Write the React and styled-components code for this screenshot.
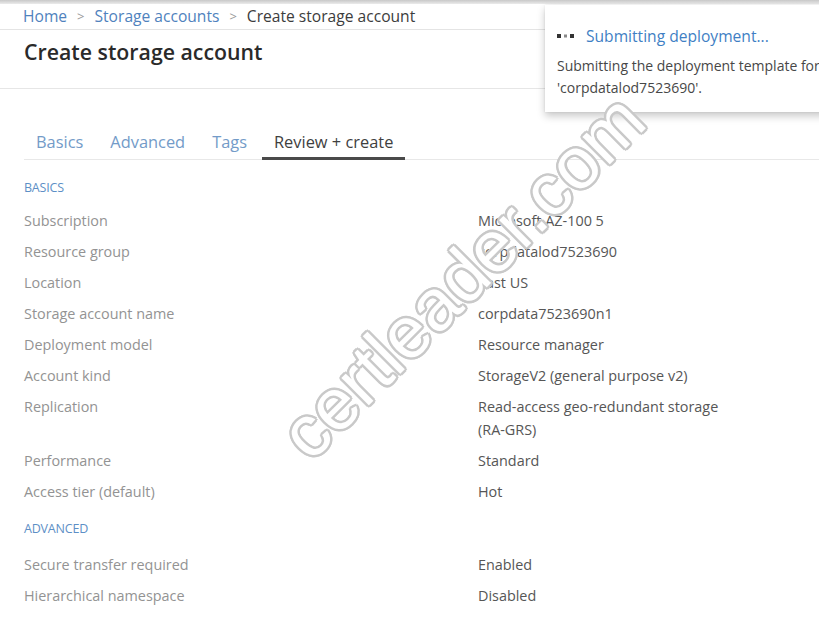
import React from "react";
import styled, { createGlobalStyle } from "styled-components";

const GlobalStyle = createGlobalStyle`
  html, body { margin: 0; padding: 0; background: #ffffff; }
  body { font-family: "Open Sans", "Noto Sans", sans-serif; }
`;

const Page = styled.div`
  position: relative;
  width: 819px;
  height: 638px;
  overflow: hidden;
  background: #ffffff;
`;

const TopStrip = styled.div`
  height: 4px;
  background: linear-gradient(#c8c8c8, #ebebeb);
`;

const Breadcrumb = styled.nav`
  height: 26px;
  box-sizing: border-box;
  padding-bottom: 2px;
  display: flex;
  align-items: center;
  gap: 10px;
  padding-left: 23px;
  border-bottom: 1px solid #e4e4e4;
  font-size: 15.6px;
  line-height: 20px;
`;

const Crumb = styled.span`
  color: ${(p) => (p.$current ? "#3c3c3c" : "#4f82bd")};
`;

const Chevron = styled.span`
  color: #9a9a9a;
  font-size: 13px;
`;

const Header = styled.header`
  height: 59px;
  box-sizing: border-box;
  padding: 9px 0 0 24px;
  border-bottom: 1px solid #e6e6e6;
`;

const Title = styled.h1`
  margin: 0;
  font-size: 21.3px;
  line-height: 26px;
  font-weight: 600;
  color: #2a2a2a;
`;

const Content = styled.main`
  padding: 0 0 0 24px;
`;

const Tabs = styled.div`
  margin-top: 35px;
  display: flex;
  gap: 3px;
  border-bottom: 1px solid #e8e8e8;
`;

const Tab = styled.div`
  padding: 1px 12px 0;
  height: 36px;
  box-sizing: border-box;
  display: flex;
  align-items: center;
  font-size: 16.4px;
  color: ${(p) => (p.$active ? "#3f3f3f" : "#739bc8")};
  border-bottom: 3px solid ${(p) => (p.$active ? "#4a4a4a" : "transparent")};
  margin-bottom: -1px;
`;

const SectionHeading = styled.div`
  margin-top: ${(p) => p.$top}px;
  margin-bottom: ${(p) => p.$bottom}px;
  font-size: 12.5px;
  line-height: 20px;
  color: #5d8fc6;
  text-transform: uppercase;
  letter-spacing: -0.2px;
`;

const Row = styled.div`
  display: grid;
  grid-template-columns: 454px 1fr;
  padding: 4px 0;
  font-size: 14.4px;
  line-height: 23px;
`;

const Label = styled.div`
  color: #939393;
`;

const Value = styled.div`
  color: #565656;
  width: 260px;
`;

const Toast = styled.div`
  position: absolute;
  left: 545px;
  top: 5px;
  width: 320px;
  height: 107px;
  background: #ffffff;
  box-shadow: 0 4px 8px rgba(0, 0, 0, 0.22), 0 0 2px rgba(0, 0, 0, 0.08);
  box-sizing: border-box;
  padding: 20px 0 0 12px;
`;

const ToastHead = styled.div`
  display: flex;
  align-items: center;
  gap: 10px;
  height: 22px;
`;

const ToastTitle = styled.div`
  font-size: 15.6px;
  color: #3f7fc4;
`;

const ToastBody = styled.div`
  margin-top: 8px;
  font-size: 14px;
  line-height: 22px;
  color: #474747;
  white-space: nowrap;
`;

const Watermark = styled.div`
  position: absolute;
  left: 462px;
  top: 276px;
  transform: translate(-50%, -50%) rotate(-45deg);
  font-family: "Liberation Sans", Arial, sans-serif;
  font-size: 73px;
  line-height: 1;
  color: #ffffff;
  white-space: nowrap;
  pointer-events: none;
  text-shadow:
    2.5px 0 0 #c9c9c9, -2.5px 0 0 #c9c9c9, 0 2.5px 0 #c9c9c9, 0 -2.5px 0 #c9c9c9,
    1.8px 1.8px 0 #c9c9c9, -1.8px 1.8px 0 #c9c9c9, 1.8px -1.8px 0 #c9c9c9,
    -1.8px -1.8px 0 #c9c9c9;
`;

const Dots = () => (
  <svg width="19" height="6" viewBox="0 0 19 6">
    <rect x="0" y="1" width="4" height="4" fill="#333" />
    <rect x="7" y="1.5" width="3" height="3" fill="#8a8a8a" />
    <rect x="13" y="1" width="4" height="4" fill="#333" />
  </svg>
);

const basics = [
  ["Subscription", ["Microsoft AZ-100 5"]],
  ["Resource group", ["corpdatalod7523690"]],
  ["Location", ["East US"]],
  ["Storage account name", ["corpdata7523690n1"]],
  ["Deployment model", ["Resource manager"]],
  ["Account kind", ["StorageV2 (general purpose v2)"]],
  ["Replication", ["Read-access geo-redundant storage", "(RA-GRS)"]],
  ["Performance", ["Standard"]],
  ["Access tier (default)", ["Hot"]],
];

const advanced = [
  ["Secure transfer required", ["Enabled"]],
  ["Hierarchical namespace", ["Disabled"]],
];

const Rows = ({ items }) =>
  items.map(([label, lines]) => (
    <Row key={label}>
      <Label>{label}</Label>
      <Value>
        {lines.map((l) => (
          <div key={l}>{l}</div>
        ))}
      </Value>
    </Row>
  ));

export default function App() {
  return (
    <Page>
      <GlobalStyle />
      <TopStrip />
      <Breadcrumb>
        <Crumb>Home</Crumb>
        <Chevron>&gt;</Chevron>
        <Crumb>Storage accounts</Crumb>
        <Chevron>&gt;</Chevron>
        <Crumb $current>Create storage account</Crumb>
      </Breadcrumb>
      <Header>
        <Title>Create storage account</Title>
      </Header>
      <Content>
        <Tabs>
          <Tab>Basics</Tab>
          <Tab>Advanced</Tab>
          <Tab>Tags</Tab>
          <Tab $active>Review + create</Tab>
        </Tabs>
        <SectionHeading $top={18} $bottom={7}>Basics</SectionHeading>
        <Rows items={basics} />
        <SectionHeading $top={12} $bottom={10}>Advanced</SectionHeading>
        <Rows items={advanced} />
      </Content>
      <Toast>
        <ToastHead>
          <Dots />
          <ToastTitle>Submitting deployment...</ToastTitle>
        </ToastHead>
        <ToastBody>
          <div>Submitting the deployment template for</div>
          <div>'corpdatalod7523690'.</div>
        </ToastBody>
      </Toast>
      <Watermark>certleader.com</Watermark>
    </Page>
  );
}
